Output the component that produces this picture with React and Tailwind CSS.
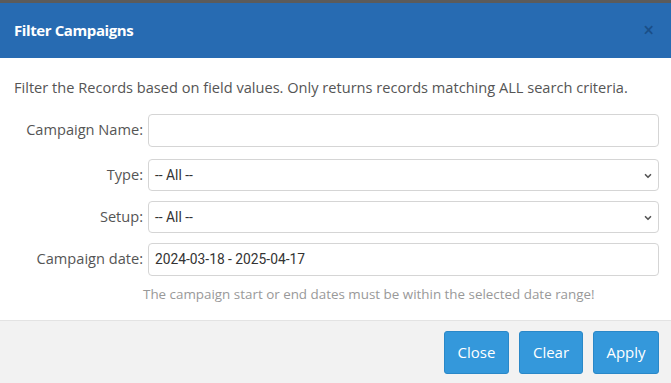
import { ChevronDown } from 'lucide-react';

const Field = ({ label, children, className = '' }) => (
  <div className={`flex items-center ${className}`}>
    <label className="w-[148px] shrink-0 pr-[5px] text-right text-[14.6px] text-[#555]">{label}</label>
    <div className="flex-1">{children}</div>
  </div>
);

const Select = ({ value }) => (
  <div className="relative flex h-[32px] items-center rounded-[4px] border border-[#d5d5d5] bg-white pl-[6px]">
    <span className="text-[13.8px] text-[#333] [font-family:Roboto,'Liberation_Sans',sans-serif]">{value}</span>
    <ChevronDown className="absolute right-[5px] top-[11px] h-[10px] w-[10px] text-[#555]" strokeWidth={4} />
  </div>
);

export default function App() {
  return (
    <div className="flex h-[383px] w-[671px] flex-col bg-white [font-family:'Open_Sans',sans-serif]">
      <div className="h-[3px] bg-[#5b5b5b]" />
      <div className="flex h-[55px] items-center justify-between bg-[#276bb2] pl-[14px] pr-[17px]">
        <h2 className="text-[15px] font-bold tracking-[-0.4px] text-white">Filter Campaigns</h2>
        <span className="text-[19px] font-semibold leading-none text-[#1a4f88]">×</span>
      </div>
      <div className="flex-1 pr-[12px] pt-[19px]">
        <p className="pl-[14px] text-[14.6px] text-[#555]">
          Filter the Records based on field values. Only returns records matching ALL search criteria.
        </p>
        <Field label="Campaign Name:" className="mt-[15px]">
          <div className="h-[33px] rounded-[4px] border border-[#d5d5d5] bg-white" />
        </Field>
        <Field label="Type:" className="mt-[12px]">
          <Select value="-- All --" />
        </Field>
        <Field label="Setup:" className="mt-[10px]">
          <Select value="-- All --" />
        </Field>
        <Field label="Campaign date:" className="mt-[10px]">
          <div className="flex h-[33px] items-center rounded-[4px] border border-[#d5d5d5] bg-white pl-[6px]">
            <span className="text-[13.8px] text-[#333] [font-family:Roboto,'Liberation_Sans',sans-serif]">2024-03-18 - 2025-04-17</span>
          </div>
        </Field>
        <p className="mt-[8px] pl-[143px] text-[13.4px] text-[#999]">
          The campaign start or end dates must be within the selected date range!
        </p>
      </div>
      <div className="flex h-[63px] items-center justify-end gap-[10px] border-t border-[#e3e3e3] bg-[#f2f2f2] pr-[12px] pt-[1px]">
        <button className="h-[43px] w-[65px] rounded-[3px] border border-[#2a88c8] bg-[#3498db] text-[15px] text-white">Close</button>
        <button className="h-[43px] w-[64px] rounded-[3px] border border-[#2a88c8] bg-[#3498db] text-[15px] text-white">Clear</button>
        <button className="h-[43px] w-[66px] rounded-[3px] border border-[#2a88c8] bg-[#3498db] text-[15px] text-white">Apply</button>
      </div>
    </div>
  );
}
